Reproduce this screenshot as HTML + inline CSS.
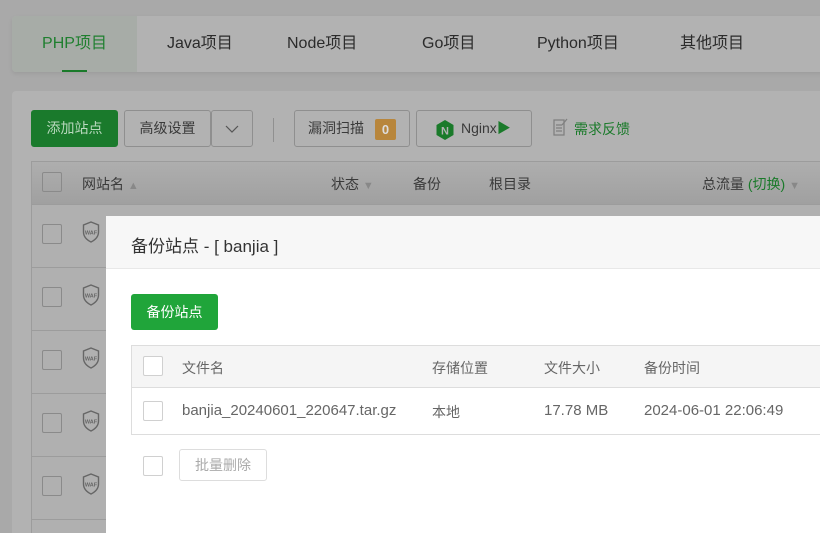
<!DOCTYPE html>
<html style="width:820px;height:533px;overflow:hidden"><head><meta charset="utf-8"><style>
*{box-sizing:border-box;margin:0;padding:0}
body{width:820px;height:533px;overflow:hidden;background:#a9a9a9;font-family:"Liberation Sans","Noto Sans CJK SC",sans-serif;position:relative;font-size:14px;color:#333}
.a{position:absolute}
.tabs{left:12px;top:16px;width:820px;height:56px;background:#b2b2b2;border-radius:4px;box-shadow:0 2px 4px rgba(0,0,0,.08)}
.tab{position:absolute;top:0;height:56px;line-height:56px;font-size:16px;color:#2b2b2b}
.panel{left:12px;top:91px;width:820px;height:460px;background:#b2b2b2;border-radius:4px}
.btn{position:absolute;height:37px;line-height:35px;border:1px solid #8f8f8f;border-radius:3px;font-size:14px;color:#3a3a3a;text-align:center}
.cb{position:absolute;width:20px;height:20px;border:1px solid #8a8a8a;border-radius:2px}
.row{position:absolute;left:31px;width:800px;height:63px;border-top:1px solid #9c9c9c;background:#b0b0b0}
.modal{left:106px;top:216px;width:720px;height:320px;background:#fff}
.mc{position:absolute;width:20px;height:20px;border:1px solid #d0d0d0;border-radius:2px;background:#fff}
</style></head><body>
<div class="a tabs">
 <div class="tab" style="left:0;width:125px;background:#a7aca7;border-radius:4px 0 0 4px;color:#1f7f2f;text-align:center">PHP项目<div style="position:absolute;left:50px;bottom:0;width:25px;height:2px;background:#1a7a2a"></div></div>
 <div class="tab" style="left:155px">Java项目</div>
 <div class="tab" style="left:275px">Node项目</div>
 <div class="tab" style="left:410px">Go项目</div>
 <div class="tab" style="left:525px">Python项目</div>
 <div class="tab" style="left:668px">其他项目</div>
</div>
<div class="a panel"></div>
<div class="btn" style="left:31px;top:110px;width:87px;background:#1a7a2c;border-color:#1a7a2c;color:#b8d8bd">添加站点</div>
<div class="btn" style="left:124px;top:110px;width:87px">高级设置</div>
<div class="btn" style="left:211px;top:110px;width:42px"><svg width="14" height="8" viewBox="0 0 14 8" style="margin-top:14px"><path d="M1 1l6 6 6-6" fill="none" stroke="#555" stroke-width="1.2"/></svg></div>
<div class="a" style="left:273px;top:118px;width:1px;height:24px;background:#909090"></div>
<div class="btn" style="left:294px;top:110px;width:116px;text-align:left;padding-left:13px">漏洞扫描<span style="position:absolute;left:80px;top:8px;width:21px;height:21px;background:#b8863c;border-radius:2px;color:#ddd;font-weight:bold;line-height:21px;text-align:center;font-size:13px">0</span></div>
<div class="btn" style="left:416px;top:110px;width:116px;text-align:left;padding-left:44px">Nginx<span style="color:#1a7a2a">▶</span>
<svg class="a" style="left:19px;top:9px" width="18" height="20" viewBox="0 0 18 20"><path d="M9 0l8.5 5v10L9 20 .5 15V5z" fill="#1a7a2a"/><text x="9" y="14.5" font-size="11" font-weight="bold" fill="#b2b2b2" text-anchor="middle" font-family="Liberation Sans">N</text></svg></div>
<svg class="a" style="left:553px;top:118px" width="15" height="18" viewBox="0 0 15 18"><path d="M1 2h10v15H1z M3 7h6M3 10h6M3 13h6" fill="none" stroke="#808080" stroke-width="1.3"/><path d="M9 7l5-6" stroke="#808080" stroke-width="1.3"/></svg>
<div class="a" style="left:574px;top:119px;color:#1a7a2a;font-size:14px">需求反馈</div>
<div class="a" style="left:31px;top:161px;width:800px;height:43px;background:linear-gradient(#aeaeae,#a0a0a0);border-top:1px solid #9c9c9c"></div>
<div class="cb" style="left:42px;top:172px"></div>
<div class="a" style="left:82px;top:174px;color:#3a3a3a">网站名 <span style="color:#888;font-size:11px">▲</span></div>
<div class="a" style="left:331px;top:174px;color:#3a3a3a">状态 <span style="color:#888;font-size:11px">▼</span></div>
<div class="a" style="left:413px;top:174px;color:#3a3a3a">备份</div>
<div class="a" style="left:489px;top:174px;color:#3a3a3a">根目录</div>
<div class="a" style="left:702px;top:174px;color:#3a3a3a">总流量 <span style="color:#1a7a2a">(切换)</span> <span style="color:#888;font-size:11px">▼</span></div>
<div class="row" style="top:204px"></div><div class="row" style="top:267px"></div><div class="row" style="top:330px"></div><div class="row" style="top:393px"></div><div class="row" style="top:456px"></div><div class="row" style="top:519px;height:14px"></div>
<div class="a" style="left:31px;top:161px;width:1px;height:372px;background:#9c9c9c"></div>
<div id="w"></div>
<script>
var h='';[224,287,350,413,476].forEach(function(t){h+='<div class="cb" style="left:42px;top:'+t+'px"></div><svg class="a" style="left:82px;top:'+(t-3)+'px" width="18" height="22" viewBox="0 0 18 22"><path d="M9 1l7.5 3v7c0 5-3.5 8-7.5 10C5 19 1.5 16 1.5 11V4z" fill="none" stroke="#666" stroke-width="1.4"/><text x="9" y="13.5" font-size="5.5" fill="#666" text-anchor="middle" font-family="Liberation Sans" font-weight="bold">WAF</text></svg>'});document.getElementById('w').outerHTML=h;
</script>
<div class="a modal">
 <div class="a" style="left:0;top:0;width:720px;height:53px;background:#f7f7f7;border-bottom:1px solid #e8e8e8"></div>
 <div class="a" style="left:25px;top:16px;font-size:17px;color:#333">备份站点 - [ banjia ]</div>
 <div class="a" style="left:25px;top:78px;width:87px;height:36px;background:#20a53a;border-radius:3px;color:#fff;line-height:36px;text-align:center;font-size:14px">备份站点</div>
 <div class="a" style="left:25px;top:129px;width:700px;height:90px;border:1px solid #ddd"></div>
 <div class="a" style="left:26px;top:130px;width:700px;height:42px;background:#f5f5f5;border-bottom:1px solid #ddd"></div>
 <div class="mc" style="left:37px;top:140px"></div>
 <div class="a" style="left:76px;top:142px;color:#666">文件名</div>
 <div class="a" style="left:326px;top:142px;color:#666">存储位置</div>
 <div class="a" style="left:438px;top:142px;color:#666">文件大小</div>
 <div class="a" style="left:538px;top:142px;color:#666">备份时间</div>
 <div class="mc" style="left:37px;top:185px"></div>
 <div class="a" style="left:76px;top:186px;color:#666;font-size:15px">banjia_20240601_220647.tar.gz</div>
 <div class="a" style="left:326px;top:186px;color:#666">本地</div>
 <div class="a" style="left:438px;top:186px;color:#666;font-size:15px">17.78 MB</div>
 <div class="a" style="left:538px;top:186px;color:#666;font-size:15px">2024-06-01 22:06:49</div>
 <div class="mc" style="left:37px;top:240px"></div>
 <div class="a" style="left:73px;top:233px;width:88px;height:32px;border:1px solid #ddd;border-radius:3px;color:#aaa;line-height:30px;text-align:center">批量删除</div>
</div>
</body></html>
